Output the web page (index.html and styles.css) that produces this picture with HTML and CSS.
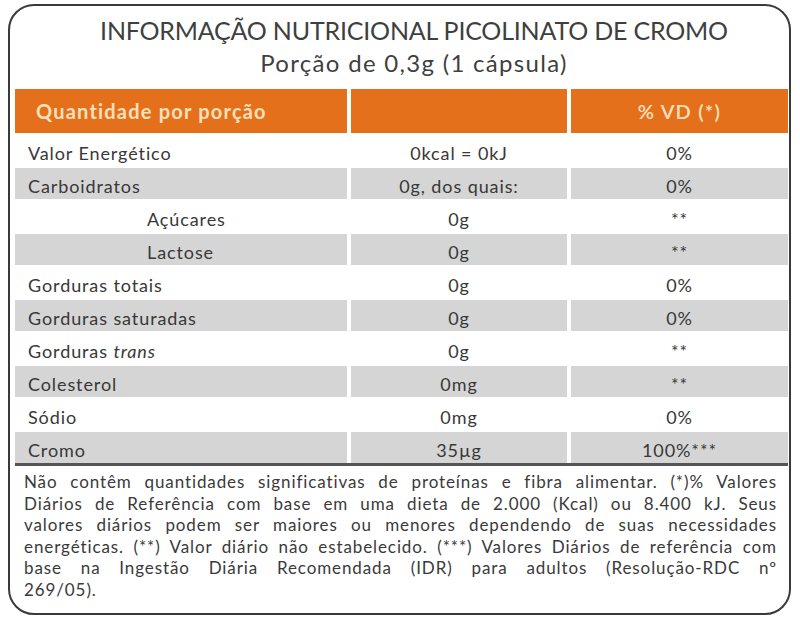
FILE: index.html
```html
<!DOCTYPE html>
<html lang="pt-BR">
<head>
<meta charset="utf-8">
<title>Informação Nutricional Picolinato de Cromo</title>
<link rel="stylesheet" href="styles.css">
</head>
<body>
<div class="card">
  <header class="head">
    <h1 class="title">INFORMAÇÃO NUTRICIONAL PICOLINATO DE CROMO</h1>
    <p class="sub">Porção de 0,3g (1 cápsula)</p>
  </header>
  <div class="table">
    <div class="th th-left">Quantidade por porção</div>
    <div class="th"></div>
    <div class="th th-center">% VD (*)</div>

    <div class="c name">Valor Energético</div><div class="c mid">0kcal = 0kJ</div><div class="c mid">0%</div>
    <div class="c g name">Carboidratos</div><div class="c g mid">0g, dos quais:</div><div class="c g mid">0%</div>
    <div class="c name ind">Açúcares</div><div class="c mid">0g</div><div class="c mid">**</div>
    <div class="c g name ind">Lactose</div><div class="c g mid">0g</div><div class="c g mid">**</div>
    <div class="c name">Gorduras totais</div><div class="c mid">0g</div><div class="c mid">0%</div>
    <div class="c g name">Gorduras saturadas</div><div class="c g mid">0g</div><div class="c g mid">0%</div>
    <div class="c name">Gorduras <i>trans</i></div><div class="c mid">0g</div><div class="c mid">**</div>
    <div class="c g name">Colesterol</div><div class="c g mid">0mg</div><div class="c g mid">**</div>
    <div class="c name">Sódio</div><div class="c mid">0mg</div><div class="c mid">0%</div>
    <div class="c g name">Cromo</div><div class="c g mid">35µg</div><div class="c g mid">100%***</div>
  </div>
  <div class="rule"></div>
  <p class="notes">
    <span class="ln">Não contêm quantidades significativas de proteínas e fibra alimentar. (*)% Valores</span>
    <span class="ln">Diários de Referência com base em uma dieta de 2.000 (Kcal) ou 8.400 kJ. Seus</span>
    <span class="ln">valores diários podem ser maiores ou menores dependendo de suas necessidades</span>
    <span class="ln">energéticas. (**) Valor diário não estabelecido. (***) Valores Diários de referência com</span>
    <span class="ln">base na Ingestão Diária Recomendada (IDR) para adultos (Resolução-RDC nº</span>
    <span class="ln last">269/05).</span>
  </p>
</div>
</body>
</html>
```
FILE: styles.css
```css
* { box-sizing: border-box; }
html, body { margin: 0; padding: 0; background: #fff; }
body {
  font-family: "Lato", "Open Sans", sans-serif;
  color: #3a3a3a;
  width: 800px;
  height: 621px;
  overflow: hidden;
}
.card {
  margin: 4px 0 0 8px;
  width: 783px;
  height: 611px;
  border: 2px solid #3a3a3a;
  border-radius: 26px;
  padding: 9px 0 0 5px;
  display: flex;
  flex-direction: column;
}
.head {
  padding-left: 24px;
  text-align: center;
  height: 74px;
}
.title {
  margin: 0;
  font-weight: 400;
  font-size: 25px;
  line-height: 30px;
  color: #3f3f3f;
  letter-spacing: -0.2px;
}
.sub {
  margin: 4px 0 0 0;
  font-size: 24px;
  line-height: 28px;
  color: #3f3f3f;
  letter-spacing: 1.3px;
}
.table {
  display: grid;
  grid-template-columns: 332px 216px 217px;
  grid-template-rows: 44px repeat(10, 31px);
  column-gap: 4px;
  row-gap: 2px;
  width: 773px;
}
.th {
  background: #e5701b;
  color: #fbe0bd;
  font-size: 20px;
  font-weight: 700;
  line-height: 45px;
  letter-spacing: 1.2px;
}
.th-left { padding-left: 21px; }
.th-center { text-align: center; font-weight: 600; }
.c {
  font-size: 18px;
  line-height: 36px;
  color: #383838;
  letter-spacing: 0.9px;
  overflow: hidden;
}
.c.g { background: #d5d5d5; }
.name { padding-left: 13px; }
.name.ind { padding-left: 132px; }
.mid { text-align: center; }
.rule {
  width: 773px;
  height: 3px;
  background: #555;
}
.notes {
  margin: 5px 0 0 0;
  padding: 0 12px 0 9px;
  font-size: 17px;
  line-height: 21.6px;
  color: #3a3a3a;
  letter-spacing: 0.9px;
}
.ln {
  display: block;
  text-align: justify;
  text-align-last: justify;
}
.ln.last { text-align-last: left; }
```
